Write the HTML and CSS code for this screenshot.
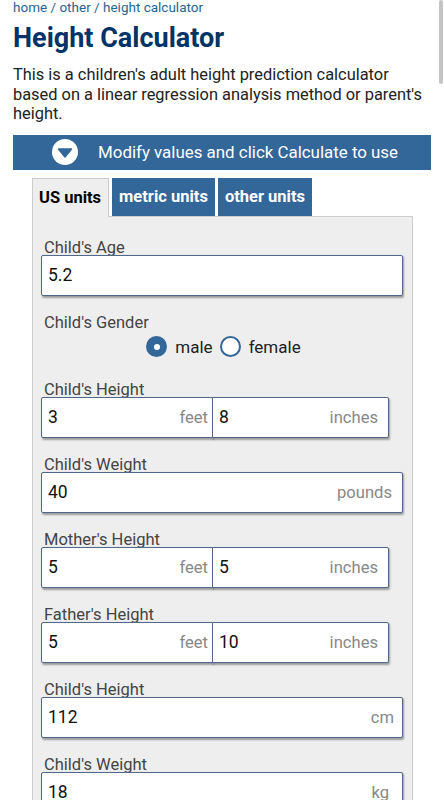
FILE: index.html
```html
<!DOCTYPE html>
<html>
<head>
<meta charset="utf-8">
<link rel="stylesheet" href="styles.css">
</head>
<body>
<div class="scrollbar"></div>
<div class="page">
  <div class="crumbs"><a>home</a> / <a>other</a> / <a>height calculator</a></div>
  <h1 class="title">Height Calculator</h1>
  <p class="intro">This is a children's adult height prediction calculator based on a linear regression analysis method or parent's height.</p>
  <div class="bar">
    <svg class="bar-icon" width="26" height="26" viewBox="0 0 26 26"><circle cx="13" cy="13" r="13" fill="#fff"/><path d="M6.5 10 L19.5 10 L13 18 Z" fill="#336699" stroke="#336699" stroke-width="1.5" stroke-linejoin="round"/></svg>
    <span class="bar-text">Modify values and click Calculate to use</span>
  </div>
  <div class="tabs">
    <div class="tab active">US units</div>
    <div class="tab">metric units</div>
    <div class="tab">other units</div>
  </div>
  <div class="panel">
    <div class="field">
      <div class="label">Child's Age</div>
      <div class="inputs"><div class="box single"><span class="val">5.2</span></div></div>
    </div>
    <div class="field gender">
      <div class="label">Child's Gender</div>
      <div class="radios">
        <span class="radio on"></span><span class="rlabel">male</span>
        <span class="radio"></span><span class="rlabel">female</span>
      </div>
    </div>
    <div class="field">
      <div class="label">Child's Height</div>
      <div class="inputs"><div class="box left"><span class="val">3</span><span class="unit u-feet">feet</span></div><div class="box right"><span class="val">8</span><span class="unit">inches</span></div></div>
    </div>
    <div class="field">
      <div class="label">Child's Weight</div>
      <div class="inputs"><div class="box single"><span class="val">40</span><span class="unit">pounds</span></div></div>
    </div>
    <div class="field">
      <div class="label">Mother's Height</div>
      <div class="inputs"><div class="box left"><span class="val">5</span><span class="unit u-feet">feet</span></div><div class="box right"><span class="val">5</span><span class="unit">inches</span></div></div>
    </div>
    <div class="field">
      <div class="label">Father's Height</div>
      <div class="inputs"><div class="box left"><span class="val">5</span><span class="unit u-feet">feet</span></div><div class="box right"><span class="val">10</span><span class="unit">inches</span></div></div>
    </div>
    <div class="field">
      <div class="label">Child's Height</div>
      <div class="inputs"><div class="box single"><span class="val">112</span><span class="unit u-cm">cm</span></div></div>
    </div>
    <div class="field">
      <div class="label">Child's Weight</div>
      <div class="inputs"><div class="box single"><span class="val">18</span><span class="unit u-kg">kg</span></div></div>
    </div>
  </div>
</div>
</body>
</html>
```
FILE: styles.css
```css
html, body { margin: 0; padding: 0; background: #fff; }
body { font-family: Roboto, "Noto Sans", "Liberation Sans", sans-serif; color: #222; overflow: hidden; height: 800px; }
.scrollbar { position: absolute; top: 0; right: 1px; width: 4px; height: 84px; background: #c4c4c4; border-radius: 2px; }
.page { padding: 0 13px; }
.crumbs { font-size: 13.5px; line-height: 15px; color: #2a6490; }
.crumbs a { color: #2a6490; }
.title { margin: 7px 0 0; font-size: 27px; line-height: 32px; font-weight: 700; color: #003366; }
.intro { margin: 11px 0 0; font-size: 16.4px; line-height: 19.5px; color: #222; }
.bar { margin-top: 11px; height: 35px; background: #336699; display: flex; align-items: center; padding-left: 39px; }
.bar-icon { display: block; }
.bar-text { color: #fff; font-size: 16.9px; margin-left: 20px; }
.tabs { display: flex; gap: 3px; margin: 8px 0 0 19px; height: 39px; position: relative; z-index: 1; }
.tab { background: #336699; color: #fff; font-weight: 700; font-size: 16.5px; padding: 0 7px; display: flex; align-items: center; height: 38px; box-sizing: border-box; }
.tab.active { background: #eeeeee; color: #000; border: 1px solid #cccccc; border-bottom: none; height: 39px; padding: 0 7px 0 6px; }
.panel { margin: -1px 0 0 19px; width: 381px; box-sizing: border-box; background: #eeeeee; border: 1px solid #cccccc; padding: 21px 8px 0 8px; min-height: 700px; }
.field { margin-bottom: 17px; }
.label { font-size: 16.5px; line-height: 20px; margin-bottom: -3px; color: #444; padding-left: 3px; }
.inputs { display: flex; }
.box { height: 41px; box-sizing: border-box; background: #fff; border: 1px solid #50698a; border-radius: 2px; box-shadow: 1px 1.5px 2px rgba(0,0,0,0.35); display: flex; align-items: center; justify-content: space-between; padding: 0 10px 0 6px; }
.box.single { width: 362px; }
.box.left { width: 172px; border-radius: 2px 0 0 2px; padding-right: 4px; }
.box.right { width: 177px; margin-left: -1px; border-radius: 0 2px 2px 0; }
.val { font-size: 17.5px; color: #111; }
.unit { font-size: 16.6px; color: #888; }
.u-cm { margin-right: -2px; }
.u-kg { margin-right: 3px; }
.gender { margin-bottom: 22px; }
.gender .label { margin-bottom: 3px; }
.radios { display: flex; align-items: center; justify-content: center; height: 22px; padding-left: 2px; }
.radio { width: 21px; height: 21px; box-sizing: border-box; border-radius: 50%; border: 2px solid #336699; background: #fff; display: inline-block; }
.radio.on { background: #336699; position: relative; }
.radio.on::after { content: ""; position: absolute; left: 5.5px; top: 5.5px; width: 6px; height: 6px; border-radius: 50%; background: #fff; }
.rlabel { font-size: 17px; color: #222; margin: 0 7px 0 8px; }
.rlabel:last-child { margin-right: 0; }
```
